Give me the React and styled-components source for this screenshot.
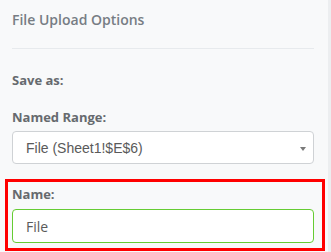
import React from "react";
import styled, { createGlobalStyle } from "styled-components";

const GlobalStyle = createGlobalStyle`
  html, body {
    margin: 0;
    padding: 0;
    background: #eceef0;
    overflow: hidden;
  }
  * { box-sizing: border-box; }
`;

const Page = styled.div`
  display: flex;
  width: 331px;
  height: 252px;
  background: #eceef0;
`;

const Panel = styled.div`
  flex: none;
  width: 328px;
  height: 252px;
  background: #f8f9fa;
  padding: 10px 14px 0 12px;
  display: flex;
  flex-direction: column;
  font-family: "Open Sans", "Liberation Sans", sans-serif;
`;

const Title = styled.div`
  font-size: 14px;
  font-weight: 600;
  line-height: 20px;
  color: #777d84;
  margin-bottom: 18px;
`;

const Divider = styled.div`
  height: 1px;
  background: #e7eaed;
  margin-bottom: 21px;
`;

const Label = styled.div`
  font-size: 13px;
  font-weight: 700;
  line-height: 20px;
  color: #666a6e;
  margin-bottom: ${(p) => p.$gap ?? 4}px;
`;

const SelectBox = styled.div`
  position: relative;
  height: 33px;
  background: #fff;
  border: 1px solid #cfd2d5;
  border-radius: 4px;
  display: flex;
  align-items: center;
  padding-left: 13px;
  font-family: "Liberation Sans", Arial, sans-serif;
  font-size: 14px;
  color: #5a5a5a;
  margin-bottom: 15px;
`;

const Caret = styled.span`
  position: absolute;
  right: 7px;
  top: 15px;
  width: 0;
  height: 0;
  border-left: 3px solid transparent;
  border-right: 3px solid transparent;
  border-top: 4px solid #7a7a7a;
`;

const Highlight = styled.div`
  margin: 0 -11px 0 -7px;
  border: 3px solid #ff0000;
  padding: 2px 8px 5px 4px;
`;

const TextInput = styled.div`
  height: 34px;
  background: #fff;
  border: 1px solid #66cc33;
  border-radius: 4px;
  display: flex;
  align-items: center;
  padding-left: 13px;
  font-size: 14px;
  color: #5a5a5a;
`;

export default function App() {
  return (
    <>
      <GlobalStyle />
      <Page>
        <Panel>
          <Title>File Upload Options</Title>
          <Divider />
          <Label $gap={17}>Save as:</Label>
          <Label>Named Range:</Label>
          <SelectBox>
            File (Sheet1!$E$6)
            <Caret />
          </SelectBox>
          <Highlight>
            <Label $gap={5}>Name:</Label>
            <TextInput>File</TextInput>
          </Highlight>
        </Panel>
      </Page>
    </>
  );
}
